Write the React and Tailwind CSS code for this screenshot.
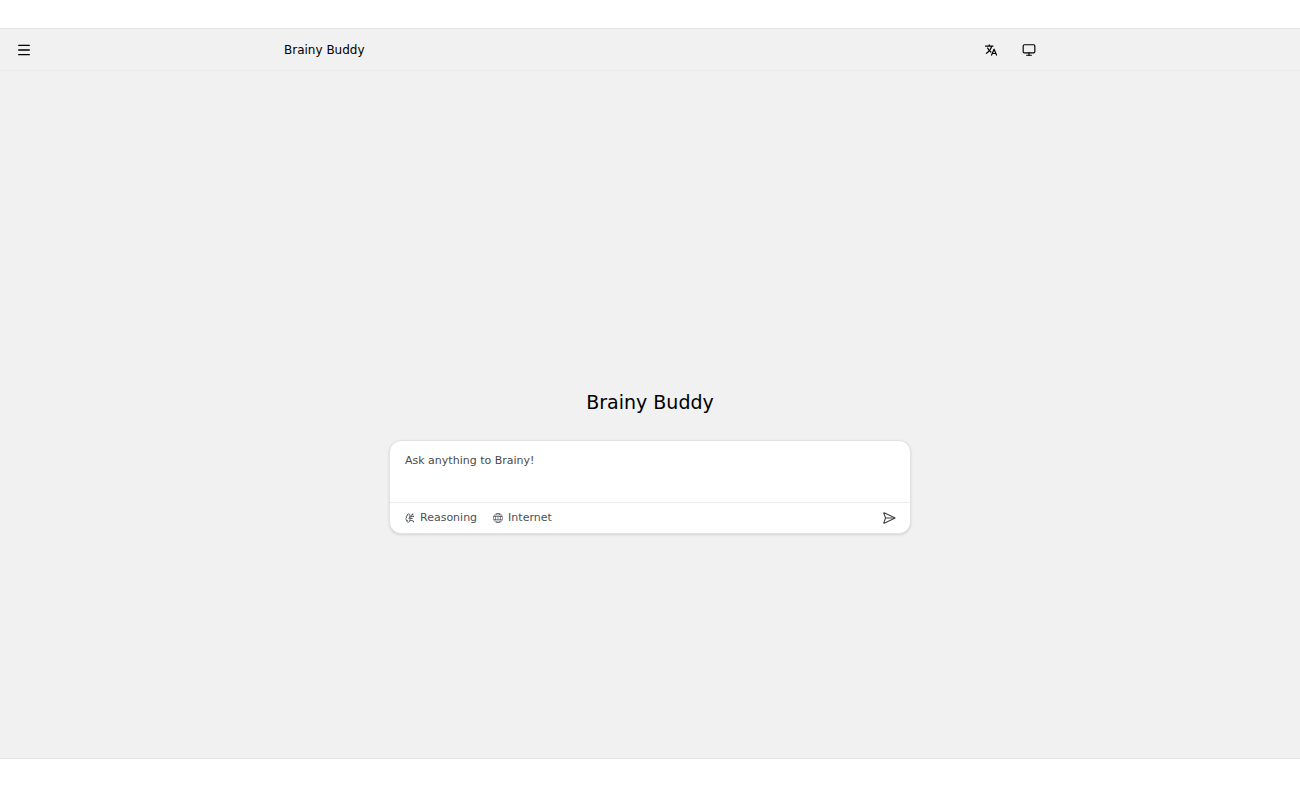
import { useState } from "react";
import { BrainCircuit, Menu, Monitor, SendHorizontal } from "lucide-react";
import { IoLanguage } from "react-icons/io5";
import { SlGlobe } from "react-icons/sl";

const modes = [
  { id: "reasoning", label: "Reasoning", Icon: BrainCircuit },
  { id: "internet", label: "Internet", Icon: SlGlobe },
];

const Header = () => (
  <header className="grid grid-cols-[1fr_minmax(0,800px)_1fr] items-center h-[42px] border-b border-[#ebebeb] text-black">
    <div className="pl-4">
      <button type="button" aria-label="Open menu" className="flex">
        <Menu className="size-4" />
      </button>
    </div>
    <div className="flex items-center justify-between pl-[34px] pr-3.5">
      <span className="text-[12px] leading-4">Brainy Buddy</span>
      <div className="flex items-center gap-6">
        <button type="button" aria-label="Change language" className="flex">
          <IoLanguage className="size-3.5" />
        </button>
        <button type="button" aria-label="Change theme" className="flex">
          <Monitor className="size-3.5" />
        </button>
      </div>
    </div>
  </header>
);

const PromptBox = () => {
  const [prompt, setPrompt] = useState("");
  const [active, setActive] = useState([]);

  const toggle = (id) => {
    setActive((prev) => (prev.includes(id) ? prev.filter((m) => m !== id) : [...prev, id]));
  };

  return (
    <form
      onSubmit={(e) => e.preventDefault()}
      className="w-full max-w-[522px] rounded-xl border border-[#e2e2e2] bg-white shadow-sm overflow-hidden"
    >
      <textarea
        aria-label="Prompt"
        value={prompt}
        onChange={(e) => setPrompt(e.target.value)}
        placeholder="Ask anything to Brainy!"
        className="block w-full h-[61px] resize-none px-[15px] py-3 text-[11px] leading-4 text-black placeholder:text-[#4a4a4a] outline-none"
      />
      <div className="flex items-center justify-between h-[31px] border-t border-[#ebebeb] pl-[15px] pr-3.5 text-[#4b4f58]">
        <div className="flex items-center gap-4">
          {modes.map(({ id, label, Icon }) => (
            <button
              key={id}
              type="button"
              aria-pressed={active.includes(id)}
              onClick={() => toggle(id)}
              className="flex items-center gap-[5px] text-[11px] leading-4 aria-pressed:text-blue-600"
            >
              <Icon className="size-2.5" />
              {label}
            </button>
          ))}
        </div>
        <button type="submit" aria-label="Send" className="flex text-[#444444]">
          <SendHorizontal className="size-3.5" />
        </button>
      </div>
    </form>
  );
};

export default function App() {
  return (
    <div className="min-h-screen flex flex-col bg-white pt-7 pb-[29px] font-['DejaVu_Sans',sans-serif]">
      <div className="flex-1 flex flex-col border-y border-[#e4e4e4] bg-[#f1f1f1]">
        <Header />
        <main className="flex-1 flex flex-col items-center justify-center gap-6 px-4 pt-[92px]">
          <h1 className="text-[19px] leading-7 text-black">Brainy Buddy</h1>
          <PromptBox />
        </main>
      </div>
    </div>
  );
}
